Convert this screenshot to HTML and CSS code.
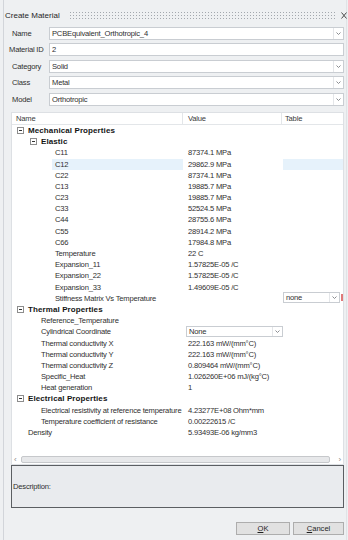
FILE: index.html
```html
<!DOCTYPE html>
<html lang="en">
  <head>
    <meta charset="UTF-8" />
    <title>Create Material</title>
    <link rel="stylesheet" href="styles.css">
  </head>
  <body>
    <div class="dialog">
      <!-- title bar -->
      <div class="titlebar">
        <span class="title">Create Material</span>
        <span class="grip"></span>
        <svg class="close" width="6" height="7" viewBox="0 0 6 7"><path d="M0.5 0.5 L5.5 6.5 M5.5 0.5 L0.5 6.5" stroke="#4a4a4a" stroke-width="1" fill="none"/></svg>
      </div>

      <!-- material fields -->
      <div class="form">
        <div class="field">
          <label>Name</label>
          <div class="box"><span class="text">PCBEquivalent_Orthotropic_4</span><span class="drop"><svg width="5" height="3" viewBox="0 0 5 3"><path d="M0.5 0.5 L2.5 2.5 L4.5 0.5" fill="none" stroke="#8a8d91"/></svg></span></div>
        </div>
        <div class="field">
          <label class="tight">Material ID</label>
          <div class="box"><span class="text">2</span></div>
        </div>
        <div class="field">
          <label>Category</label>
          <div class="box"><span class="text">Solid</span><span class="drop"><svg width="5" height="3" viewBox="0 0 5 3"><path d="M0.5 0.5 L2.5 2.5 L4.5 0.5" fill="none" stroke="#8a8d91"/></svg></span></div>
        </div>
        <div class="field">
          <label>Class</label>
          <div class="box"><span class="text">Metal</span><span class="drop"><svg width="5" height="3" viewBox="0 0 5 3"><path d="M0.5 0.5 L2.5 2.5 L4.5 0.5" fill="none" stroke="#8a8d91"/></svg></span></div>
        </div>
        <div class="field">
          <label>Model</label>
          <div class="box"><span class="text">Orthotropic</span><span class="drop"><svg width="5" height="3" viewBox="0 0 5 3"><path d="M0.5 0.5 L2.5 2.5 L4.5 0.5" fill="none" stroke="#8a8d91"/></svg></span></div>
        </div>
      </div>

      <!-- property grid -->
      <div class="grid">
        <div class="head">
          <div class="h-name">Name</div>
          <div class="h-val">Value</div>
          <div class="h-tbl">Table</div>
        </div>
        <div class="rows">
          <div class="row group"><div class="name l0"><i class="tog"></i>Mechanical Properties</div><div class="val"></div><div class="tbl"></div></div>
          <div class="row group"><div class="name l1"><i class="tog"></i>Elastic</div><div class="val"></div><div class="tbl"></div></div>
          <div class="row"><div class="name l2">C11</div><div class="val">87374.1 MPa</div><div class="tbl"></div></div>
          <div class="row sel"><div class="name l2s"><span>C12</span></div><div class="val">29862.9 MPa</div><div class="tbl"></div></div>
          <div class="row"><div class="name l2">C22</div><div class="val">87374.1 MPa</div><div class="tbl"></div></div>
          <div class="row"><div class="name l2">C13</div><div class="val">19885.7 MPa</div><div class="tbl"></div></div>
          <div class="row"><div class="name l2">C23</div><div class="val">19885.7 MPa</div><div class="tbl"></div></div>
          <div class="row"><div class="name l2">C33</div><div class="val">52524.5 MPa</div><div class="tbl"></div></div>
          <div class="row"><div class="name l2">C44</div><div class="val">28755.6 MPa</div><div class="tbl"></div></div>
          <div class="row"><div class="name l2">C55</div><div class="val">28914.2 MPa</div><div class="tbl"></div></div>
          <div class="row"><div class="name l2">C66</div><div class="val">17984.8 MPa</div><div class="tbl"></div></div>
          <div class="row"><div class="name l2">Temperature</div><div class="val">22 C</div><div class="tbl"></div></div>
          <div class="row"><div class="name l2">Expansion_11</div><div class="val">1.57825E-05 /C</div><div class="tbl"></div></div>
          <div class="row"><div class="name l2">Expansion_22</div><div class="val">1.57825E-05 /C</div><div class="tbl"></div></div>
          <div class="row"><div class="name l2">Expansion_33</div><div class="val">1.49609E-05 /C</div><div class="tbl"></div></div>
          <div class="row"><div class="name l2">Stiffness Matrix Vs Temperature</div><div class="val"></div>
            <div class="tbl">
              <div class="dd dd-none"><span class="text">none</span><span class="drop"><svg width="5" height="3" viewBox="0 0 5 3"><path d="M0.5 0.5 L2.5 2.5 L4.5 0.5" fill="none" stroke="#8a8d91"/></svg></span></div>
              <span class="flag"></span>
            </div>
          </div>
          <div class="row group"><div class="name l0"><i class="tog"></i>Thermal Properties</div><div class="val"></div><div class="tbl"></div></div>
          <div class="row"><div class="name l1n">Reference_Temperature</div><div class="val"></div><div class="tbl"></div></div>
          <div class="row"><div class="name l1n">Cylindrical Coordinate</div>
            <div class="val">
              <div class="dd dd-cyl"><span class="text">None</span><span class="drop"><svg width="5" height="3" viewBox="0 0 5 3"><path d="M0.5 0.5 L2.5 2.5 L4.5 0.5" fill="none" stroke="#8a8d91"/></svg></span></div>
            </div>
            <div class="tbl"></div>
          </div>
          <div class="row"><div class="name l1n">Thermal conductivity X</div><div class="val">222.163 mW/(mm°C)</div><div class="tbl"></div></div>
          <div class="row"><div class="name l1n">Thermal conductivity Y</div><div class="val">222.163 mW/(mm°C)</div><div class="tbl"></div></div>
          <div class="row"><div class="name l1n">Thermal conductivity Z</div><div class="val">0.809464 mW/(mm°C)</div><div class="tbl"></div></div>
          <div class="row"><div class="name l1n">Specific_Heat</div><div class="val">1.026260E+06 mJ/(kg°C)</div><div class="tbl"></div></div>
          <div class="row"><div class="name l1n">Heat generation</div><div class="val">1</div><div class="tbl"></div></div>
          <div class="row group"><div class="name l0"><i class="tog"></i>Electrical Properties</div><div class="val"></div><div class="tbl"></div></div>
          <div class="row"><div class="name l1n">Electrical resistivity at reference temperature</div><div class="val">4.23277E+08 Ohm*mm</div><div class="tbl"></div></div>
          <div class="row"><div class="name l1n">Temperature coefficient of resistance</div><div class="val">0.00222615 /C</div><div class="tbl"></div></div>
          <div class="row"><div class="name l0n">Density</div><div class="val">5.93493E-06 kg/mm3</div><div class="tbl"></div></div>
        </div>
        <div class="hscroll">
          <span class="arr-l">&lsaquo;</span>
          <span class="track"></span>
          <span class="arr-r">&rsaquo;</span>
        </div>
      </div>

      <!-- description -->
      <div class="desc">Description:</div>

      <!-- buttons -->
      <div class="buttons">
        <button class="btn btn-ok"><u>O</u>K</button>
        <button class="btn btn-cancel"><u>C</u>ancel</button>
      </div>
    </div>
  </body>
</html>
```

FILE: styles.css
```css
* {
  box-sizing: border-box;
}
body {
  margin: 0;
  width: 348px;
  height: 540px;
  overflow: hidden;
  background: #eef0f2;
  font-family: "Liberation Sans", Arial, sans-serif;
  font-size: 7.6px;
  letter-spacing: -0.2px;
  color: #2f2f2f;
}
.dialog {
  height: 540px;
  margin: 0 1px 0 3px;
  border-left: 1px solid #d2d5da;
  border-right: 1px solid #e0e3e6;
  padding: 0 2px 0 7px;
  display: flex;
  flex-direction: column;
}

/* title bar */
.titlebar {
  height: 27px;
  padding-top: 3px;
  margin: 0 -3px 0 -6px;
  display: flex;
  align-items: center;
}
.title {
  font-size: 8px;
  letter-spacing: 0;
  color: #1f1f1f;
}
.grip {
  flex: 1;
  height: 8px;
  margin: 0 4px 0 9px;
  background-image: radial-gradient(circle, #a3a8ae 0.6px, transparent 0.9px);
  background-size: 3px 3px;
}

/* fields */
.form {
  display: flex;
  flex-direction: column;
  gap: 3.4px;
}
.field {
  display: flex;
  align-items: center;
  height: 13px;
}
.field label {
  width: 38px;
  padding-left: 1px;
}
.field label.tight {
  padding-left: 0;
  margin-left: -2px;
  width: 40px;
}
.box {
  flex: 1;
  height: 13px;
  display: flex;
  align-items: center;
  background: #fff;
  border: 1px solid #c9cdd2;
  padding-left: 2px;
}
.text {
  flex: 1;
  white-space: nowrap;
}
.drop {
  width: 10px;
  height: 100%;
  border-left: 1px solid #e4e6e9;
  display: flex;
  align-items: center;
  justify-content: center;
}

/* property grid */
.grid {
  margin-top: 6.4px;
  height: 353px;
  border: 1px solid #dde0e4;
  background: #fff;
  display: flex;
  flex-direction: column;
}
.head {
  display: grid;
  grid-template-columns: 171px 99px 1fr;
  height: 12px;
  border-bottom: 1px solid #e3e6e9;
  line-height: 11px;
  color: #3a3a3a;
}
.head div {
  border-right: 1px solid #e3e6e9;
}
.head .h-name {
  padding-left: 4px;
}
.head .h-val {
  padding-left: 5px;
}
.head .h-tbl {
  padding-left: 3px;
  border-right: none;
}
.rows {
  flex: 1;
}
.row {
  display: grid;
  grid-template-columns: 171px 99px 1fr;
  height: 11.2px;
  line-height: 11.2px;
  white-space: nowrap;
}
.row .val {
  padding-left: 5px;
}
.row.group .name {
  font-weight: bold;
  font-size: 8px;
  letter-spacing: 0.1px;
  color: #141414;
}
.name.l0 {
  padding-left: 5px;
}
.name.l0n {
  padding-left: 16px;
}
.name.l1 {
  padding-left: 18px;
}
.name.l1n {
  padding-left: 29px;
}
.name.l2 {
  padding-left: 43px;
}
.name.l2s {
  padding-left: 40px;
}
.name.l2s span {
  display: block;
  padding-left: 3px;
  background: #e6f2fb;
}
.row.sel .tbl {
  margin-left: 1px;
  background: #e6f2fb;
}
.tog {
  display: inline-block;
  position: relative;
  width: 7px;
  height: 7px;
  margin-right: 4px;
  vertical-align: -1px;
  border: 1px solid #8d8d8d;
  background: #fff;
}
.tog::after {
  content: "";
  position: absolute;
  left: 1px;
  top: 2px;
  width: 3px;
  height: 1px;
  background: #333;
}

/* in-cell dropdowns */
.tbl {
  display: flex;
  align-items: center;
}
.dd {
  display: flex;
  align-items: center;
  height: 11px;
  background: #fff;
  border: 1px solid #c9cdd2;
  padding-left: 2px;
}
.dd-none {
  width: 57px;
  margin: -1px 0 0 1px;
}
.dd-cyl {
  width: 97px;
  margin-left: -2px;
}
.flag {
  width: 2px;
  height: 7px;
  margin: -2px 0 0 1px;
  background: #e07a7a;
}

/* scrollbar */
.hscroll {
  height: 8px;
  display: flex;
  align-items: center;
  color: #8a8a8a;
  font-size: 8px;
}
.arr-l {
  width: 9px;
  padding-left: 2px;
}
.track {
  flex: 1;
  height: 7px;
  background: #e7e8ea;
  border: 1px solid #c6c8cb;
  border-radius: 2px;
}
.arr-r {
  width: 13px;
  text-align: right;
  padding-right: 2px;
}

/* description */
.desc {
  height: 43px;
  border: 1px solid #5b5e62;
  background: #e9ebee;
  display: flex;
  align-items: center;
  padding-left: 1px;
}

/* buttons */
.buttons {
  margin-top: 14px;
  display: flex;
  justify-content: flex-end;
  gap: 3px;
}
.btn {
  height: 13px;
  padding: 0;
  border: 1px solid #adadad;
  background: #e1e1e1;
  font: inherit;
  color: #1f1f1f;
}
.btn-ok {
  width: 54px;
}
.btn-cancel {
  width: 51px;
}
```
